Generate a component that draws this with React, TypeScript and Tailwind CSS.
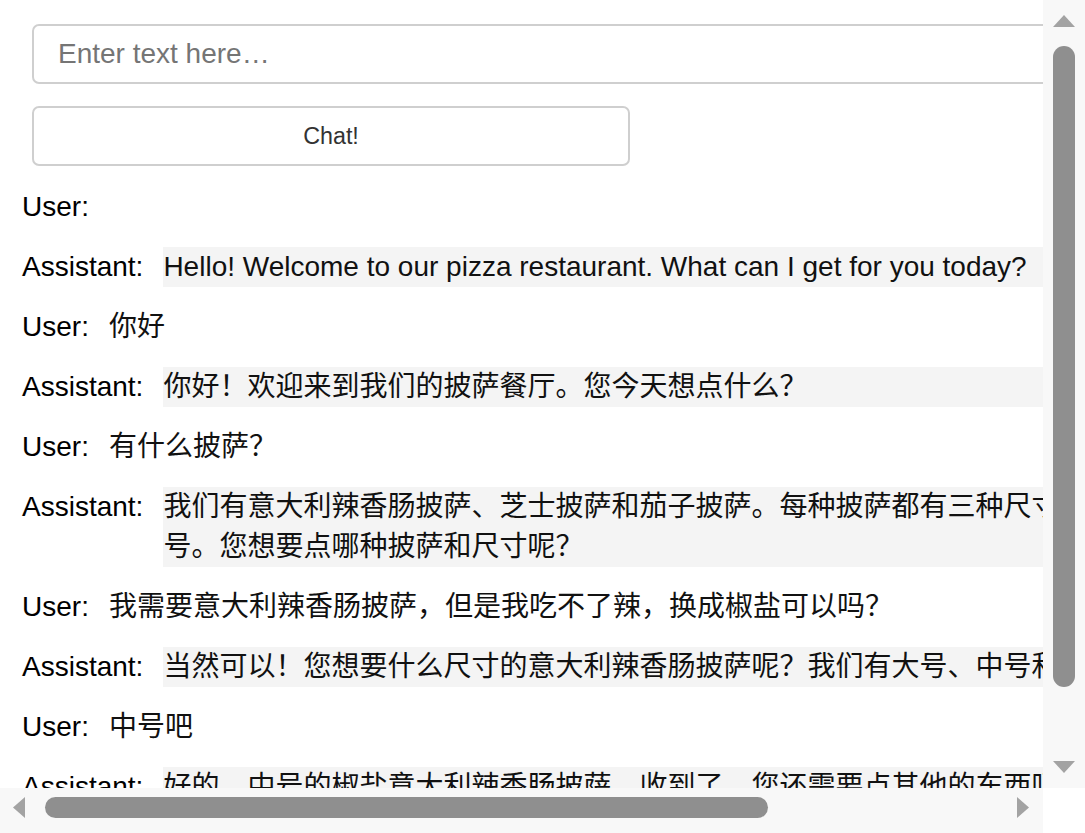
import React from "react";

type Msg = { role: "User" | "Assistant"; text: string };

const messages: Msg[] = [
  { role: "User", text: "" },
  { role: "Assistant", text: "Hello! Welcome to our pizza restaurant. What can I get for you today?" },
  { role: "User", text: "你好" },
  { role: "Assistant", text: "你好！欢迎来到我们的披萨餐厅。您今天想点什么？" },
  { role: "User", text: "有什么披萨？" },
  {
    role: "Assistant",
    text: "我们有意大利辣香肠披萨、芝士披萨和茄子披萨。每种披萨都有三种尺寸：大号、中号和小号。您想要点哪种披萨和尺寸呢？",
  },
  { role: "User", text: "我需要意大利辣香肠披萨，但是我吃不了辣，换成椒盐可以吗？" },
  { role: "Assistant", text: "当然可以！您想要什么尺寸的意大利辣香肠披萨呢？我们有大号、中号和小号。" },
  { role: "User", text: "中号吧" },
  { role: "Assistant", text: "好的，中号的椒盐意大利辣香肠披萨，收到了。您还需要点其他的东西吗？" },
];

function Arrow({ dir }: { dir: "up" | "down" | "left" | "right" }) {
  if (dir === "up")
    return (
      <svg width="22" height="12" viewBox="0 0 22 12" className="block shrink-0">
        <polygon points="11,0 22,12 0,12" fill="#a3a3a3" />
      </svg>
    );
  if (dir === "down")
    return (
      <svg width="22" height="12" viewBox="0 0 22 12" className="block shrink-0">
        <polygon points="0,0 22,0 11,12" fill="#a3a3a3" />
      </svg>
    );
  if (dir === "left")
    return (
      <svg width="12" height="21" viewBox="0 0 12 21" className="block shrink-0">
        <polygon points="12,0 12,21 0,10.5" fill="#a3a3a3" />
      </svg>
    );
  return (
    <svg width="12" height="21" viewBox="0 0 12 21" className="block shrink-0">
      <polygon points="0,0 12,10.5 0,21" fill="#a3a3a3" />
    </svg>
  );
}

export default function App() {
  return (
    <div className="grid h-[833px] w-[1085px] grid-cols-[1043px_42px] grid-rows-[788px_45px] overflow-hidden bg-white font-['Liberation_Sans','Noto_Sans_CJK_SC',sans-serif]">
      {/* content viewport */}
      <div className="overflow-hidden">
        <div className="w-[1372px] pt-[24px]">
          <div className="pl-[32px]">
            <div className="flex h-[60px] w-[1320px] items-center rounded-[7px] border-2 border-[#cfcfcf] bg-white pl-[24px] text-[28px] text-[#757575]">
              Enter text here…
            </div>
            <div className="mt-[22px] flex h-[60px] w-[598px] items-center justify-center rounded-[7px] border-2 border-[#cfcfcf] bg-white text-[23.3px] text-[#333333]">
              Chat!
            </div>
          </div>
          <div className="mt-[21px] flex flex-col gap-[20px] pl-[22px] text-[28px] leading-[40px] text-[#111111]">
            {messages.map((m, i) => (
              <div key={i} className="flex items-start">
                <span className="mr-[20px] shrink-0 text-black">{m.role}:</span>
                {m.role === "Assistant" ? (
                  <div className="w-[1140px] shrink-0 bg-[#f4f4f4]">{m.text}</div>
                ) : (
                  m.text && <div className="shrink-0">{m.text}</div>
                )}
              </div>
            ))}
          </div>
        </div>
      </div>

      {/* vertical scrollbar */}
      <div className="flex flex-col items-center bg-[#f8f8f8] pt-[15px] pb-[15px]">
        <Arrow dir="up" />
        <div className="mt-[19px] h-[641px] w-[22px] rounded-full bg-[#8f8f8f]" />
        <div className="flex-1" />
        <Arrow dir="down" />
      </div>

      {/* horizontal scrollbar */}
      <div className="flex items-start bg-[#f8f8f8] pt-[9px] pl-[13px] pr-[14px]">
        <Arrow dir="left" />
        <div className="ml-[20px] h-[21px] w-[723px] rounded-full bg-[#8f8f8f]" />
        <div className="flex-1" />
        <Arrow dir="right" />
      </div>

      {/* corner */}
      <div className="bg-white" />
    </div>
  );
}
